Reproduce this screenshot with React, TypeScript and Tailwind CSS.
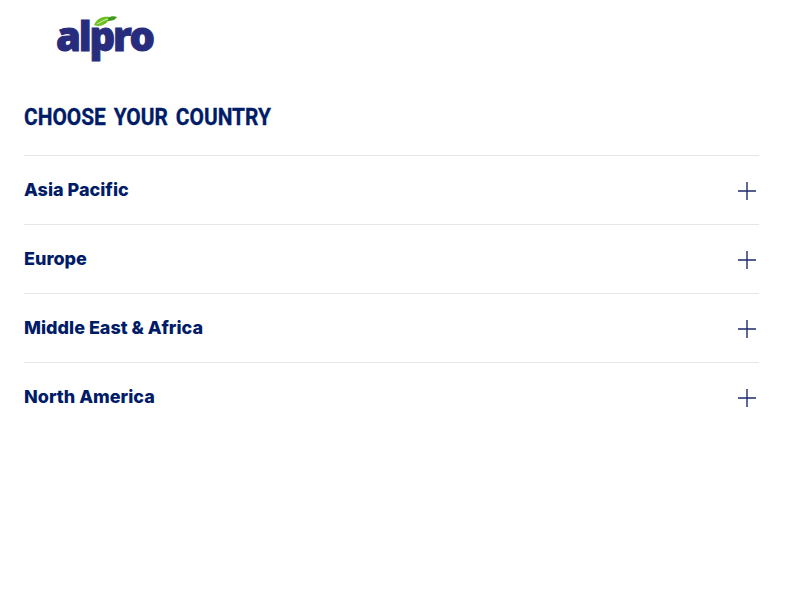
const rows = ["Asia Pacific", "Europe", "Middle East & Africa", "North America"];

function Plus() {
  return (
    <svg width="18" height="18" viewBox="0 0 18 18" className="mt-[2px] shrink-0 text-[#1f2a6e]" fill="none" stroke="currentColor" strokeWidth="1.4">
      <path d="M0 9H18M9 0V18" />
    </svg>
  );
}

function Logo() {
  return (
    <div className="relative h-[66px] w-[100px]">
      <span className="absolute left-[-1px] top-[16px] font-['Open_Sans',sans-serif] text-[40px] leading-[40px] font-extrabold tracking-[-2.2px] text-[#272c7c] [-webkit-text-stroke:1px_#272c7c]">
        alpro
      </span>
      <svg className="absolute left-[36px] top-[15px]" width="26" height="14" viewBox="0 0 26 14">
        <path d="M1 10C4 3 10 1 17 2C16 8 8 13 1 10Z" fill="#6cc024" />
        <path d="M15 3C18 1 21 1 24 2C22 5 19 6 15 6Z" fill="#3f9a1e" />
        <path d="M4 9C8 7 11 5 15 4" stroke="#d8f0b0" strokeWidth="1" fill="none" />
      </svg>
    </div>
  );
}

export default function App() {
  return (
    <div className="min-h-[600px] bg-white font-['Inter',sans-serif] text-[#001c67]">
      <div className="pl-[57px]">
        <Logo />
      </div>
      <div className="px-[24px] pr-[41px]">
        <h1 className="h-[89px] origin-left scale-x-[0.908] pt-[38px] font-['Roboto',sans-serif] text-[23px] leading-[28px] font-bold [word-spacing:3px] [-webkit-text-stroke:0.3px_#001c67]">CHOOSE YOUR COUNTRY</h1>
        {rows.map((r) => (
          <div key={r} className="flex h-[69px] items-center justify-between border-t border-[#e6e6e6] pr-[3px]">
            <span className="text-[18px] leading-[24px] font-extrabold">{r}</span>
            <Plus />
          </div>
        ))}
      </div>
    </div>
  );
}
